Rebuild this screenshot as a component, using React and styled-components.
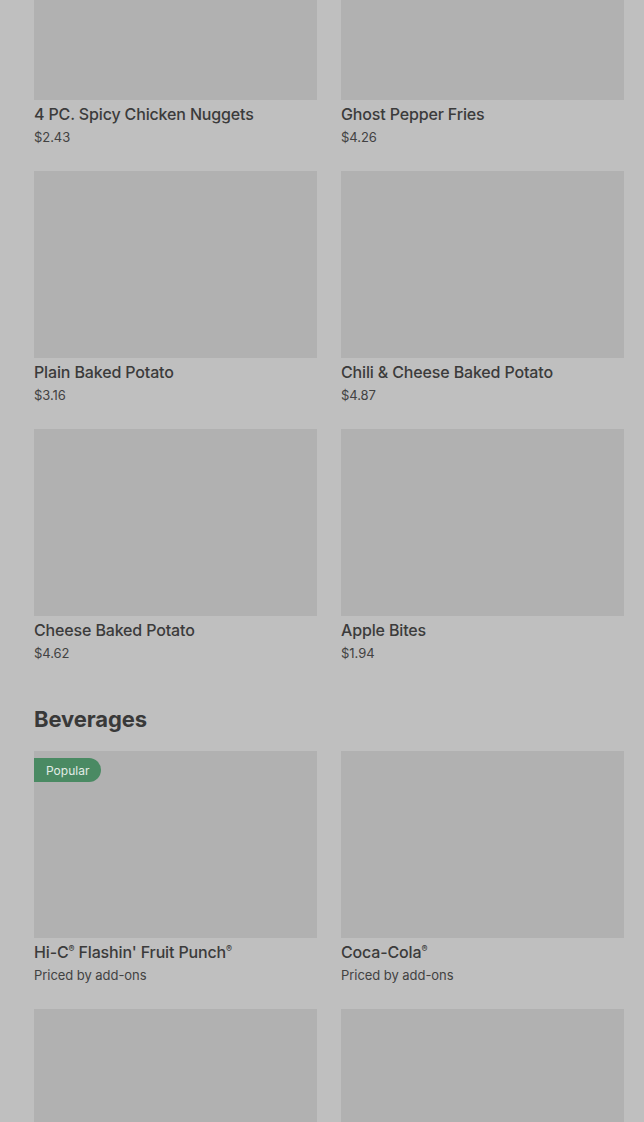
import React from "react";
import styled, { createGlobalStyle } from "styled-components";

const GlobalStyle = createGlobalStyle`
  html, body {
    margin: 0;
    padding: 0;
    background: #bfbfbf;
    overflow: hidden;
  }
  body {
    font-family: Inter, "Noto Sans", "Liberation Sans", sans-serif;
    color: #3b3b3b;
  }
`;

const Page = styled.div`
  height: 1122px;
  overflow: hidden;
  background: #bfbfbf;
`;

const Scroller = styled.div`
  margin-top: -87px;
  padding: 0 20px 0 34px;
`;

const Section = styled.section`
  padding-bottom: 29px;
`;

const SectionTitle = styled.h2`
  margin: 9px 0 16px;
  font-size: 22px;
  line-height: 32px;
  font-weight: 700;
  letter-spacing: -0.1px;
  color: #393939;
`;

const Grid = styled.div`
  display: grid;
  grid-template-columns: 1fr 1fr;
  column-gap: 24px;
  row-gap: 22px;
`;

const Card = styled.div`
  display: flex;
  flex-direction: column;
`;

const Thumb = styled.div`
  position: relative;
  height: 187px;
  background: #b1b1b1;
`;

const Badge = styled.span`
  position: absolute;
  top: 7px;
  left: 0;
  height: 24px;
  padding: 0 12px;
  display: flex;
  align-items: center;
  background: #4a8a63;
  color: #e2ece6;
  font-size: 12px;
  border-radius: 0 12px 12px 0;
`;

const Name = styled.div`
  margin-top: 3px;
  font-size: 16px;
  line-height: 22px;
  font-weight: 500;
  letter-spacing: -0.15px;
  color: #3b3b3b;
`;

const Mark = styled.sup`
  font-size: 9px;
  line-height: 0;
  vertical-align: 6px;
`;

const Price = styled.div`
  font-size: 13px;
  line-height: 24px;
  letter-spacing: -0.05px;
  color: #424242;
`;

const food = [
  { name: "4 PC. Spicy Chicken Nuggets", price: "$2.43" },
  { name: "Ghost Pepper Fries", price: "$4.26" },
  { name: "Plain Baked Potato", price: "$3.16" },
  { name: "Chili & Cheese Baked Potato", price: "$4.87" },
  { name: "Cheese Baked Potato", price: "$4.62" },
  { name: "Apple Bites", price: "$1.94" },
];

const drinks = [
  { name: "Hi-C® Flashin' Fruit Punch®", price: "Priced by add-ons", popular: true },
  { name: "Coca-Cola®", price: "Priced by add-ons" },
  { name: "Sprite®", price: "Priced by add-ons" },
  { name: "Barq's® Root Beer", price: "Priced by add-ons" },
];

// split out the ® marks so they sit small and raised
const withMarks = (text) =>
  text.split(/(®)/).map((part, i) =>
    part === "®" ? <Mark key={i}>®</Mark> : part
  );

const Item = ({ name, price, popular }) => (
  <Card>
    <Thumb>{popular && <Badge>Popular</Badge>}</Thumb>
    <Name>{withMarks(name)}</Name>
    <Price>{price}</Price>
  </Card>
);

export default function App() {
  return (
    <Page>
      <GlobalStyle />
      <Scroller>
        <Section>
          <Grid>
            {food.map((f) => (
              <Item key={f.name} {...f} />
            ))}
          </Grid>
        </Section>
        <Section>
          <SectionTitle>Beverages</SectionTitle>
          <Grid>
            {drinks.map((d) => (
              <Item key={d.name} {...d} />
            ))}
          </Grid>
        </Section>
      </Scroller>
    </Page>
  );
}
